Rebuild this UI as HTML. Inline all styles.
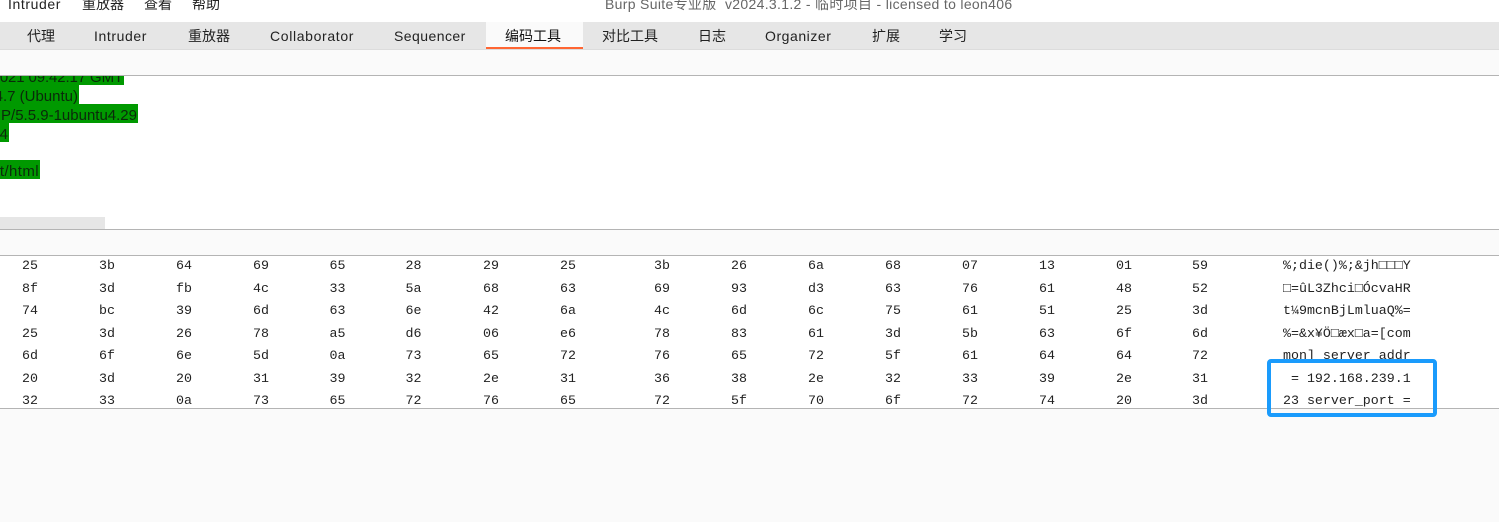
<!DOCTYPE html>
<html><head><meta charset="utf-8">
<style>
html,body{margin:0;padding:0;background:#fff}
#p{position:relative;width:1499px;height:522px;overflow:hidden;background:#fff;font-family:"Liberation Sans","Noto Sans CJK SC",sans-serif;color:#222}
.b{position:absolute;left:0;width:1499px}
.t{position:absolute;white-space:pre;font-size:14px;line-height:20px;letter-spacing:.6px;color:#222}
.c{letter-spacing:0}
.g{position:absolute;left:0;background:#009900;height:19px;overflow:hidden}
.g span{position:absolute;right:1px;top:2px;line-height:19px;font-size:15px;white-space:pre;color:#0a2a0a}
.r{position:absolute;left:22px;height:20px;display:grid;grid-template-columns:77px 77px 77px 76.5px 76px 77.5px 77px 94px 77px 77px 77px 77px 77px 77px 76px 91px 140px;font:13.3px/20px "Liberation Mono",monospace;color:#222;white-space:pre}
</style></head><body>
<div id="p">
<div class="t" style="left:8px;top:-6px">Intruder</div>
<div class="t c" style="left:82px;top:-6px">重放器</div>
<div class="t c" style="left:144px;top:-6px">查看</div>
<div class="t c" style="left:192px;top:-6px">帮助</div>
<div class="t" style="left:605px;top:-6px;color:#666;letter-spacing:.32px">Burp Suite专业版  v2024.3.1.2 - 临时项目 - licensed to leon406</div>

<div class="b" style="top:22px;height:27px;background:#e6e6e6"></div>
<div class="b" style="top:49px;height:1px;background:#dcdcdc"></div>
<div class="b" style="top:50px;height:25px;background:#fafafa"></div>
<div class="b" style="top:75px;height:1px;background:#b4b4b4"></div>
<div style="position:absolute;left:486px;top:22px;width:97px;height:25px;background:#fafafa"></div>
<div style="position:absolute;left:486px;top:47px;width:97px;height:2px;background:#ff6633"></div>

<div class="t c" style="left:27px;top:26px">代理</div>
<div class="t" style="left:94px;top:26px">Intruder</div>
<div class="t c" style="left:188px;top:26px">重放器</div>
<div class="t" style="left:270px;top:26px;letter-spacing:.65px">Collaborator</div>
<div class="t" style="left:394px;top:26px;letter-spacing:.45px">Sequencer</div>
<div class="t c" style="left:505px;top:26px;color:#111">编码工具</div>
<div class="t c" style="left:602px;top:26px">对比工具</div>
<div class="t c" style="left:698px;top:26px">日志</div>
<div class="t" style="left:765px;top:26px;letter-spacing:.55px">Organizer</div>
<div class="t c" style="left:872px;top:26px">扩展</div>
<div class="t c" style="left:939px;top:26px">学习</div>

<div class="g" style="top:76px;width:124px;height:9px"><span style="top:-8px;letter-spacing:-.12px">2021 09:42:17 GMT</span></div>
<div class="g" style="top:85px;width:79px"><span>4.7 (Ubuntu)</span></div>
<div class="g" style="top:104px;width:138px"><span>P/5.5.9-1ubuntu4.29</span></div>
<div class="g" style="top:123px;width:9px"><span>4</span></div>
<div class="g" style="top:160px;width:40px"><span style="letter-spacing:.4px">t/html</span></div>

<div style="position:absolute;left:0;top:217px;width:105px;height:12px;background:#e6e6e6"></div>
<div class="b" style="top:229px;height:1px;background:#b4b4b4"></div>
<div class="b" style="top:230px;height:25px;background:#fafafa"></div>
<div class="b" style="top:255px;height:1px;background:#b4b4b4"></div>
<div class="b" style="top:408px;height:1px;background:#b4b4b4"></div>
<div class="b" style="top:409px;height:113px;background:#fafafa"></div>

<div class="r" style="top:256px"><span>25</span><span>3b</span><span>64</span><span>69</span><span>65</span><span>28</span><span>29</span><span>25</span><span>3b</span><span>26</span><span>6a</span><span>68</span><span>07</span><span>13</span><span>01</span><span>59</span><span>%;die()%;&amp;jh□□□Y</span></div>
<div class="r" style="top:279px"><span>8f</span><span>3d</span><span>fb</span><span>4c</span><span>33</span><span>5a</span><span>68</span><span>63</span><span>69</span><span>93</span><span>d3</span><span>63</span><span>76</span><span>61</span><span>48</span><span>52</span><span>□=ûL3Zhci□ÓcvaHR</span></div>
<div class="r" style="top:301px"><span>74</span><span>bc</span><span>39</span><span>6d</span><span>63</span><span>6e</span><span>42</span><span>6a</span><span>4c</span><span>6d</span><span>6c</span><span>75</span><span>61</span><span>51</span><span>25</span><span>3d</span><span>t¼9mcnBjLmluaQ%=</span></div>
<div class="r" style="top:324px"><span>25</span><span>3d</span><span>26</span><span>78</span><span>a5</span><span>d6</span><span>06</span><span>e6</span><span>78</span><span>83</span><span>61</span><span>3d</span><span>5b</span><span>63</span><span>6f</span><span>6d</span><span>%=&amp;x¥Ö□æx□a=[com</span></div>
<div class="r" style="top:346px"><span>6d</span><span>6f</span><span>6e</span><span>5d</span><span>0a</span><span>73</span><span>65</span><span>72</span><span>76</span><span>65</span><span>72</span><span>5f</span><span>61</span><span>64</span><span>64</span><span>72</span><span>mon] server_addr</span></div>
<div class="r" style="top:369px"><span>20</span><span>3d</span><span>20</span><span>31</span><span>39</span><span>32</span><span>2e</span><span>31</span><span>36</span><span>38</span><span>2e</span><span>32</span><span>33</span><span>39</span><span>2e</span><span>31</span><span> = 192.168.239.1</span></div>
<div class="r" style="top:391px"><span>32</span><span>33</span><span>0a</span><span>73</span><span>65</span><span>72</span><span>76</span><span>65</span><span>72</span><span>5f</span><span>70</span><span>6f</span><span>72</span><span>74</span><span>20</span><span>3d</span><span>23 server_port =</span></div>

<div style="position:absolute;left:1267px;top:359px;width:170px;height:58px;box-sizing:border-box;border:4px solid #1a9bfc;border-radius:4px"></div>
</div>
</body></html>
